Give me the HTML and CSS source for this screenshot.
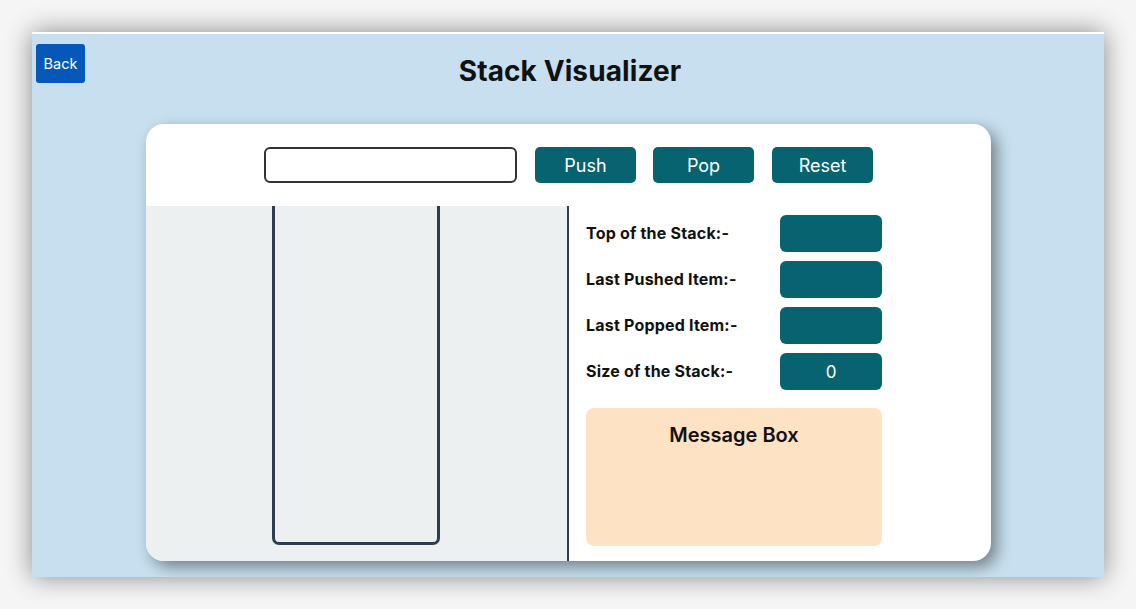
FILE: index.html
```html
<!DOCTYPE html>
<html lang="en">
<head>
<meta charset="utf-8">
<title>Stack Visualizer</title>
<link rel="stylesheet" href="styles.css">
</head>
<body>
<div class="frame">
  <header class="header">
    <div class="header-left"><button class="back-btn">Back</button></div>
    <h1 class="title">Stack Visualizer</h1>
    <div class="header-right"></div>
  </header>
  <main class="card">
    <div class="controls">
      <input class="value-input" type="text">
      <button class="ctrl-btn">Push</button>
      <button class="ctrl-btn pop-btn">Pop</button>
      <button class="ctrl-btn">Reset</button>
    </div>
    <div class="body">
      <section class="stack-area">
        <div class="stack"></div>
      </section>
      <section class="info">
        <div class="info-row"><span class="label">Top of the Stack:-</span><span class="val"></span></div>
        <div class="info-row"><span class="label">Last Pushed Item:-</span><span class="val"></span></div>
        <div class="info-row"><span class="label">Last Popped Item:-</span><span class="val"></span></div>
        <div class="info-row"><span class="label">Size of the Stack:-</span><span class="val">0</span></div>
        <div class="message-box"><h2 class="message-title">Message Box</h2></div>
      </section>
    </div>
  </main>
</div>
</body>
</html>
```

FILE: styles.css
```css
* { box-sizing: border-box; }
html, body { margin: 0; padding: 0; }
body {
  background: #f5f5f5;
  width: 1136px;
  height: 609px;
  overflow: hidden;
  padding: 32px 32px 0 32px;
  font-family: "Inter", "Open Sans", sans-serif;
}
.frame {
  width: 1072px;
  height: 545px;
  background: #c7dfee;
  border-top: 2px solid #ffffff;
  box-shadow: 0 0 24px rgba(0,0,0,0.45);
  overflow: hidden;
}
.header {
  display: grid;
  grid-template-columns: 1fr auto 1fr;
  align-items: start;
  padding: 10px 0 0 4px;
  height: 90px;
}
.back-btn {
  width: 49px;
  height: 39px;
  background: #0558b8;
  color: #fff;
  border: none;
  border-radius: 3px;
  font-family: inherit;
  font-size: 14.5px;
  padding: 0;
}
.title {
  margin: 10px 0 0 0;
  font-size: 28px;
  font-weight: 700;
  color: #111;
  letter-spacing: 0.1px;
}
.card {
  margin-left: 114px;
  width: 845px;
  height: 437px;
  background: #fff;
  border-radius: 18px;
  box-shadow: 6px 6px 15px rgba(0,0,0,0.42);
  overflow: hidden;
  display: flex;
  flex-direction: column;
}
.controls {
  height: 82px;
  display: flex;
  align-items: flex-start;
  padding: 23px 0 0 118px;
  gap: 18px;
}
.value-input {
  width: 253px;
  height: 36px;
  border: 2px solid #333;
  border-radius: 6px;
  background: #fff;
  outline: none;
}
.ctrl-btn {
  width: 101px;
  height: 36px;
  background: #07636f;
  color: #fff;
  border: none;
  border-radius: 5px;
  font-family: inherit;
  font-size: 18px;
  padding: 0;
}
.pop-btn { margin-left: -1px; }
.body {
  flex: 1;
  display: flex;
}
.stack-area {
  width: 423px;
  background: #ecf0f1;
  border-right: 2px solid #2c3e50;
  padding-left: 126px;
}
.stack {
  width: 168px;
  height: 339px;
  border: 3px solid #2c3e50;
  border-top: none;
  border-radius: 0 0 7px 7px;
}
.info {
  flex: 1;
  padding: 9px 0 0 17px;
  display: flex;
  flex-direction: column;
  gap: 9px;
}
.info-row {
  display: flex;
  align-items: center;
  height: 37px;
}
.label {
  width: 194px;
  font-size: 16px;
  font-weight: 700;
  color: #111;
  letter-spacing: 0.2px;
  margin-top: -1px;
}
.val {
  width: 102px;
  height: 37px;
  background: #07636f;
  color: #fff;
  border-radius: 6px;
  display: flex;
  align-items: center;
  justify-content: center;
  font-size: 17px;
}
.message-box {
  margin-top: 9px;
  width: 296px;
  height: 138px;
  background: #fde3c4;
  border-radius: 8px;
  text-align: center;
  padding-top: 15px;
}
.message-title {
  margin: 0;
  font-size: 20px;
  font-weight: 600;
  color: #111;
}
```
